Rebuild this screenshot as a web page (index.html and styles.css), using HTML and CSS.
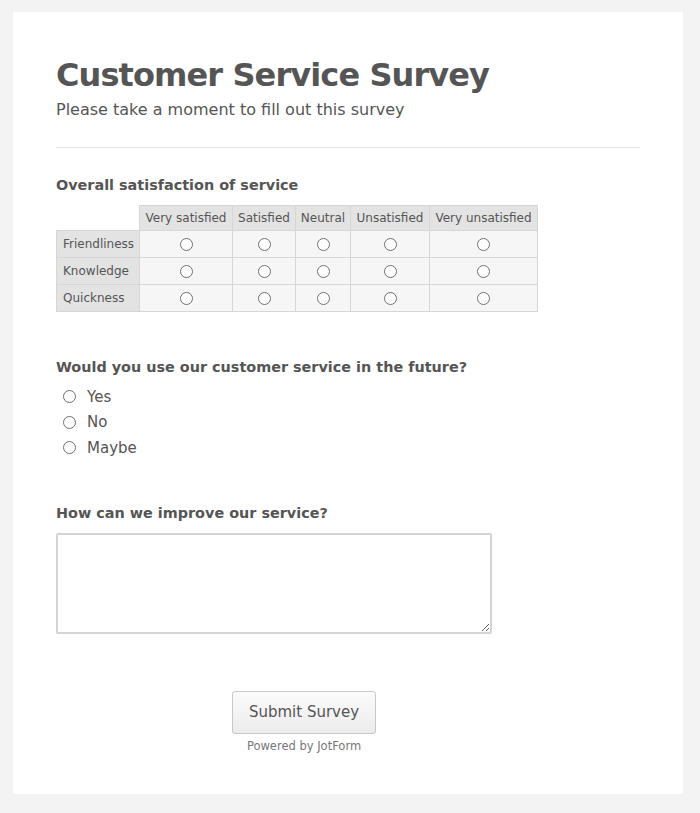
FILE: index.html
```html
<!DOCTYPE html>
<html>
<head>
<meta charset="utf-8">
<link rel="stylesheet" href="styles.css">
</head>
<body>
<div class="card">
  <h1 class="title">Customer Service Survey</h1>
  <p class="subtitle">Please take a moment to fill out this survey</p>
  <hr class="divider">

  <h2 class="question q-matrix">Overall satisfaction of service</h2>
  <table class="matrix">
    <thead>
      <tr>
        <th class="blank"></th>
        <th class="c1">Very satisfied</th>
        <th class="c2">Satisfied</th>
        <th class="c3">Neutral</th>
        <th class="c4">Unsatisfied</th>
        <th class="c5">Very unsatisfied</th>
      </tr>
    </thead>
    <tbody>
      <tr>
        <th class="rowlabel">Friendliness</th>
        <td><span class="radio"></span></td><td><span class="radio"></span></td><td><span class="radio"></span></td><td><span class="radio"></span></td><td><span class="radio"></span></td>
      </tr>
      <tr>
        <th class="rowlabel">Knowledge</th>
        <td><span class="radio"></span></td><td><span class="radio"></span></td><td><span class="radio"></span></td><td><span class="radio"></span></td><td><span class="radio"></span></td>
      </tr>
      <tr>
        <th class="rowlabel">Quickness</th>
        <td><span class="radio"></span></td><td><span class="radio"></span></td><td><span class="radio"></span></td><td><span class="radio"></span></td><td><span class="radio"></span></td>
      </tr>
    </tbody>
  </table>

  <h2 class="question q-future">Would you use our customer service in the future?</h2>
  <div class="options">
    <div class="option"><span class="radio"></span><span class="opt-label">Yes</span></div>
    <div class="option"><span class="radio"></span><span class="opt-label">No</span></div>
    <div class="option"><span class="radio"></span><span class="opt-label">Maybe</span></div>
  </div>

  <h2 class="question q-improve">How can we improve our service?</h2>
  <div class="textarea-wrap">
    <textarea class="textarea"></textarea>
  </div>

  <div class="submit-area">
    <button class="submit">Submit Survey</button>
    <div class="powered">Powered by JotForm</div>
  </div>
</div>
</body>
</html>
```
FILE: styles.css
```css
html, body {
  margin: 0;
  padding: 0;
  background: #f3f3f3;
}
body {
  padding: 12px 17px 19px 13px;
  font-family: "DejaVu Sans", Verdana, sans-serif;
  color: #555;
}
.card {
  background: #fff;
  height: 782px;
  box-sizing: border-box;
  padding: 43px 43px 0 43px;
}
.title {
  margin: 0;
  font-size: 32px;
  line-height: 40px;
  font-weight: bold;
  color: #555;
  letter-spacing: -0.9px;
}
.subtitle {
  margin: 4px 0 0 0;
  font-size: 16px;
  line-height: 21px;
  color: #555;
}
.divider {
  border: none;
  border-top: 1px solid #e6e6e6;
  margin: 27px 0 0 0;
  height: 0;
}
.question {
  margin: 0;
  font-size: 14.4px;
  font-weight: bold;
  line-height: 20px;
  color: #555;
}
.q-matrix { margin-top: 27px; }
.matrix {
  margin-top: 10px;
  border-collapse: collapse;
  font-size: 12px;
  color: #555;
}
.matrix th, .matrix td {
  border: 1px solid #d6d6d6;
  padding: 0;
  font-weight: normal;
}
.matrix thead th {
  background: #e3e3e3;
  height: 24px;
  text-align: center;
  white-space: nowrap;
}
.matrix thead th.blank {
  background: transparent;
  border-top-color: transparent;
  border-left-color: transparent;
}
.matrix .rowlabel {
  background: #e3e3e3;
  text-align: left;
  padding-left: 6px;
  width: 76px;
  height: 26px;
}
.matrix td {
  background: #f6f6f6;
  text-align: center;
  vertical-align: middle;
}
.matrix .c1 { width: 92px; }
.matrix .c2 { width: 62px; }
.matrix .c3 { width: 54px; }
.matrix .c4 { width: 78px; }
.matrix .c5 { width: 107px; }
.radio {
  display: inline-block;
  width: 13px;
  height: 13px;
  border: 1px solid #707070;
  border-radius: 50%;
  background: #fff;
  vertical-align: middle;
  box-sizing: border-box;
}
.q-future { margin-top: 45px; }
.options {
  margin-top: 7px;
  padding-left: 7px;
}
.option {
  display: flex;
  align-items: center;
  height: 25.5px;
  font-size: 15px;
}
.option .radio {
  margin-right: 11px;
}
.q-improve { margin-top: 42px; }
.textarea-wrap { margin-top: 10px; }
.textarea {
  display: block;
  width: 436px;
  height: 101px;
  box-sizing: border-box;
  border: 2px solid #d4d4d4;
  border-radius: 2px;
  margin: 0;
  resize: both;
  background: #fff;
}
.submit-area {
  display: flex;
  flex-direction: column;
  align-items: center;
  width: 496px;
  margin-top: 57px;
}
.submit {
  width: 144px;
  height: 43px;
  border: 1px solid #c8c8c8;
  border-radius: 3px;
  background: linear-gradient(#fbfbfb, #ececec);
  font-family: "DejaVu Sans", Verdana, sans-serif;
  font-size: 15px;
  color: #555;
}
.powered {
  margin-top: 4px;
  font-size: 11.5px;
  color: #777;
  line-height: 16px;
}
```
